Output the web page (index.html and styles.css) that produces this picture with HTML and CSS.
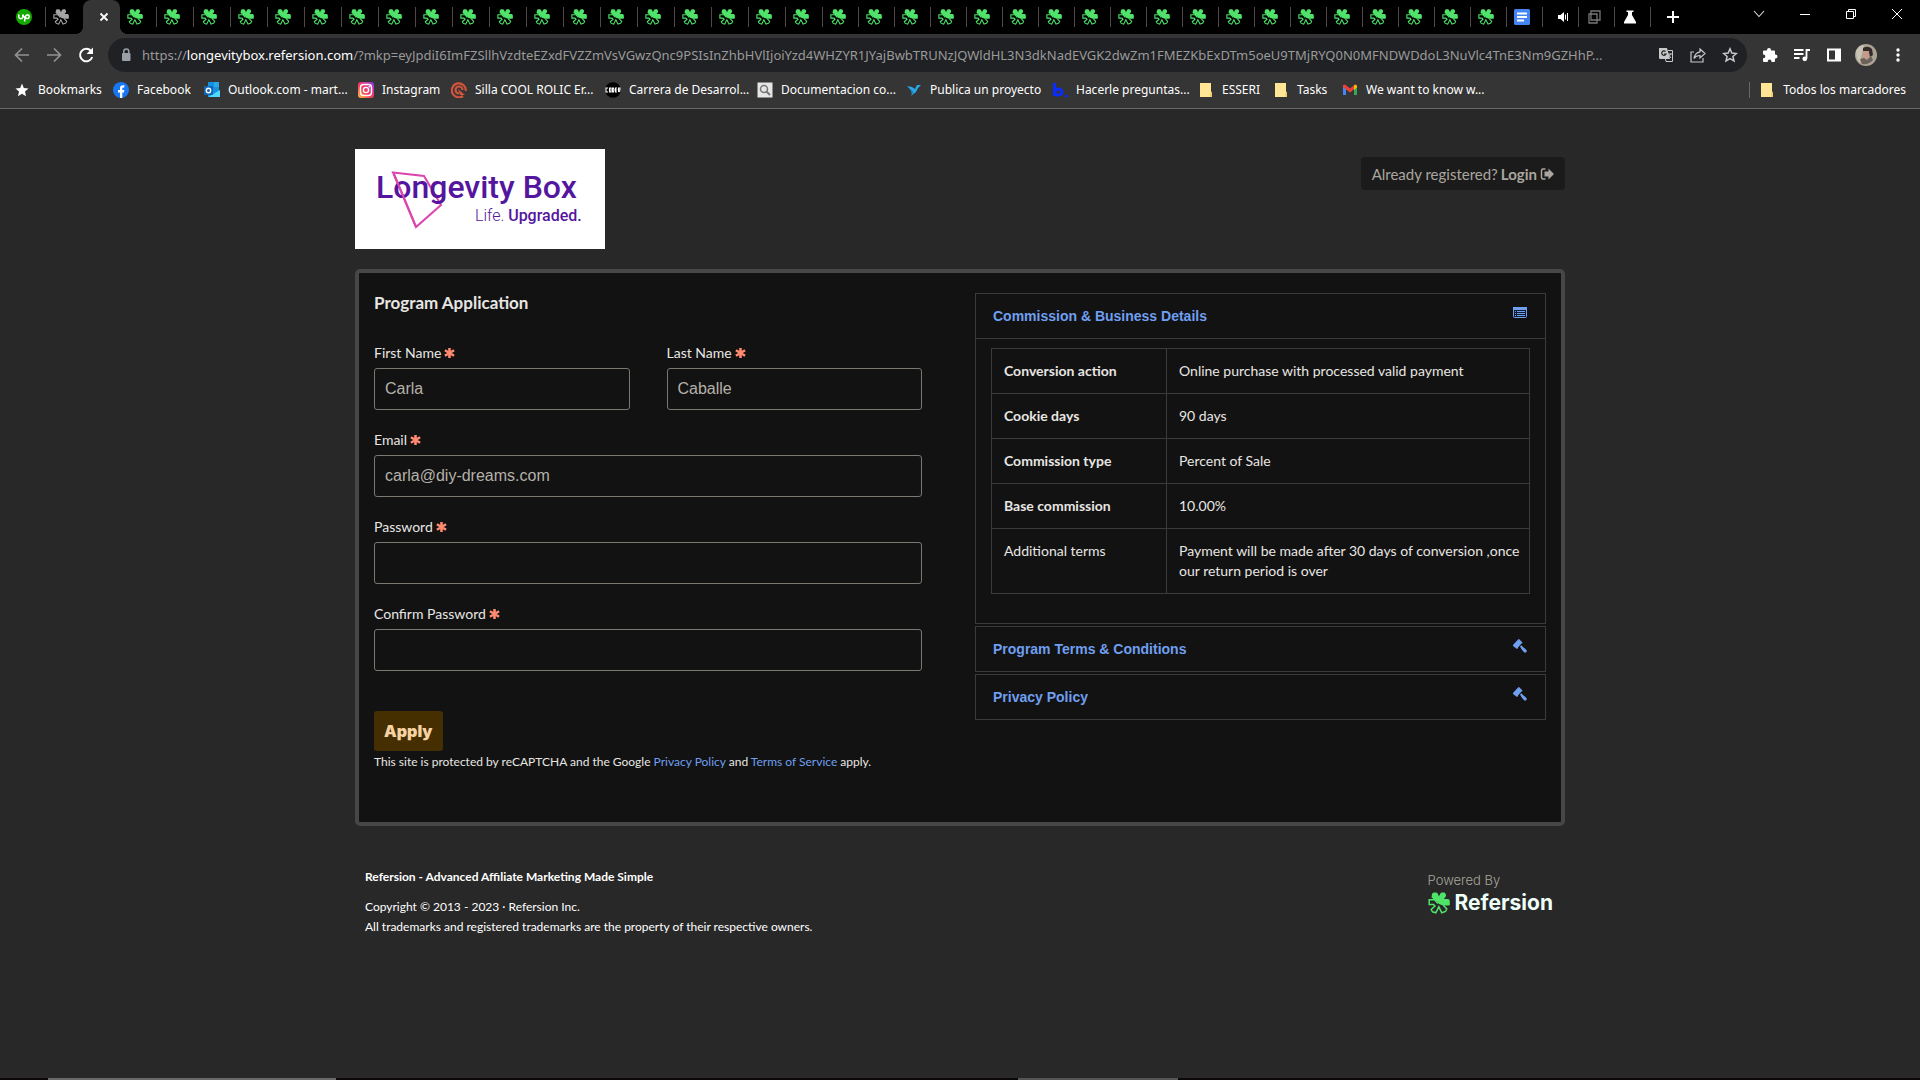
FILE: index.html
```html
<!DOCTYPE html>
<html lang="en">
<head>
<meta charset="utf-8">
<meta name="viewport" content="width=device-width, initial-scale=1">
<title>Longevity Box - Program Application</title>
<link rel="stylesheet" href="styles.css">
</head>
<body>
<svg class="sprite" aria-hidden="true">
  <symbol id="clover" viewBox="0 0 22 22">
    <path fill="currentColor" d="M9 9.500L3.500 5.500L4 2Q4.500 .500 6 .500H8.500Q10 1 11 4.500Q12 1 13.500 .500H16.500Q18.500 2 18 4L16 7H20Q21.800 7.300 21.800 9V13L20.500 13.500H15L11 12Z"/>
    <path fill="none" stroke="currentColor" stroke-width="1.500" d="M10 11.500L6.500 7.800H1.200V12.500H5.500L7 14L3.200 17.500L4.500 19.800L7.800 20.800L10.800 14.800L13.800 20.800L17.500 19.500L18.800 17L15.300 13.300"/>
  </symbol>
  <symbol id="folder" viewBox="0 0 16 16">
    <path fill="#ffe596" d="M2 1H13V9L14 11V15H2Z"/><path fill="#f3cf6b" d="M12 11h2v4h-2z"/>
  </symbol>
  <symbol id="required" viewBox="0 0 12 12">
    <path stroke="#ff8a70" stroke-width="2.800" d="M6 .500V11.500M1 3L11 9M11 3L1 9"/>
  </symbol>
  <symbol id="gavel" viewBox="0 0 14 14">
    <path fill="currentColor" d="M0 6L5 .500L6 0L9.500 3.500L9 4.500L8.500 4.500L5 8.500L5 9L4 10L0 7ZM7 7.500L8.500 6.200L10 8L13.500 11L13.800 12.500L12.500 13.800L11 13.300L8.500 10.200Z"/>
  </symbol>
</svg>

<header class="browser">
  <div class="tabstrip">
    <div class="tabs">
      <span class="tab"><svg viewBox="0 0 16 16"><circle cx="8" cy="8" r="8" fill="#14a800"/><path fill="none" stroke="#fff" stroke-width="1.500" d="M2.800 5.500V8Q3 9.800 4.800 9.800Q6.700 9.700 6.800 8V5.500Q7.800 8.500 9.200 9.300M8.500 12.500L9.300 8Q9.800 5.700 11.500 5.700Q13.300 5.900 13.300 7.700Q13 9.600 11.500 9.600Q10 9.500 8.800 8"/></svg></span>
      <span class="tab muted"><svg><use href="#clover"/></svg></span>
      <span class="tab active"><button class="tab-close" aria-label="Close tab"><svg viewBox="0 0 16 16"><path stroke="#fff" stroke-width="1.800" d="M4.500 4.500L11.500 11.500M11.500 4.500L4.500 11.500"/></svg></button></span>
      <span class="tab"><svg><use href="#clover"/></svg></span>
      <span class="tab"><svg><use href="#clover"/></svg></span>
      <span class="tab"><svg><use href="#clover"/></svg></span>
      <span class="tab"><svg><use href="#clover"/></svg></span>
      <span class="tab"><svg><use href="#clover"/></svg></span>
      <span class="tab"><svg><use href="#clover"/></svg></span>
      <span class="tab"><svg><use href="#clover"/></svg></span>
      <span class="tab"><svg><use href="#clover"/></svg></span>
      <span class="tab"><svg><use href="#clover"/></svg></span>
      <span class="tab"><svg><use href="#clover"/></svg></span>
      <span class="tab"><svg><use href="#clover"/></svg></span>
      <span class="tab"><svg><use href="#clover"/></svg></span>
      <span class="tab"><svg><use href="#clover"/></svg></span>
      <span class="tab"><svg><use href="#clover"/></svg></span>
      <span class="tab"><svg><use href="#clover"/></svg></span>
      <span class="tab"><svg><use href="#clover"/></svg></span>
      <span class="tab"><svg><use href="#clover"/></svg></span>
      <span class="tab"><svg><use href="#clover"/></svg></span>
      <span class="tab"><svg><use href="#clover"/></svg></span>
      <span class="tab narrow"><svg><use href="#clover"/></svg></span>
      <span class="tab narrow"><svg><use href="#clover"/></svg></span>
      <span class="tab narrow"><svg><use href="#clover"/></svg></span>
      <span class="tab narrow"><svg><use href="#clover"/></svg></span>
      <span class="tab narrow"><svg><use href="#clover"/></svg></span>
      <span class="tab narrow"><svg><use href="#clover"/></svg></span>
      <span class="tab narrow"><svg><use href="#clover"/></svg></span>
      <span class="tab narrow"><svg><use href="#clover"/></svg></span>
      <span class="tab narrow"><svg><use href="#clover"/></svg></span>
      <span class="tab narrow"><svg><use href="#clover"/></svg></span>
      <span class="tab narrow"><svg><use href="#clover"/></svg></span>
      <span class="tab narrow"><svg><use href="#clover"/></svg></span>
      <span class="tab narrow"><svg><use href="#clover"/></svg></span>
      <span class="tab narrow"><svg><use href="#clover"/></svg></span>
      <span class="tab narrow"><svg><use href="#clover"/></svg></span>
      <span class="tab narrow"><svg><use href="#clover"/></svg></span>
      <span class="tab narrow"><svg><use href="#clover"/></svg></span>
      <span class="tab narrow"><svg><use href="#clover"/></svg></span>
      <span class="tab narrow"><svg><use href="#clover"/></svg></span>
      <span class="tab narrow"><svg viewBox="0 0 16 16"><rect width="16" height="16" rx="1.500" fill="#4385f5"/><path stroke="#fff" stroke-width="2" d="M3 4.500H13M3 8H13M3 11.500H10"/></svg></span>
      <span class="tab narrow audio"><svg viewBox="0 0 16 16"><path fill="#fff" d="M4 6H6.500L10 3V13L6.500 10H4Z"/><path stroke="#fff" d="M11.500 5.500V10.500M13.500 4V12"/></svg></span>
      <span class="tab narrow"><svg viewBox="0 0 16 16"><path fill="none" stroke="#777" stroke-width="1.300" d="M5 2H14V11H5ZM3 5H11V14H3Z"/></svg></span>
      <span class="tab narrow"><svg viewBox="0 0 16 16"><path fill="#fff" d="M4.500 1.500H11.500V3H10V6L14 13V14.500H2V13L6 6V3H4.500Z"/></svg></span>
      <button class="new-tab" aria-label="New tab"><svg viewBox="0 0 16 16"><path stroke="#fff" stroke-width="2" d="M8 2V14M2 8H14"/></svg></button>
    </div>
    <div class="window-controls">
      <button aria-label="Search tabs"><svg viewBox="0 0 16 16"><path fill="none" stroke="#ddd" stroke-width="1.100" d="M3 5L8 10.500L13 5"/></svg></button>
      <button aria-label="Minimize"><svg viewBox="0 0 16 16"><path stroke="#fff" d="M3 8.500H13"/></svg></button>
      <button aria-label="Restore"><svg viewBox="0 0 16 16"><path fill="none" stroke="#fff" d="M3.500 5.500H10.500V12.500H3.500ZM5.500 5.500V3.500H12.500V10.500H10.500"/></svg></button>
      <button aria-label="Close"><svg viewBox="0 0 16 16"><path stroke="#fff" d="M3 3L13 13M13 3L3 13"/></svg></button>
    </div>
  </div>

  <div class="toolbar">
    <button class="tool dim" aria-label="Back"><svg viewBox="0 0 16 16"><path fill="none" stroke="currentColor" stroke-width="1.700" d="M15 8H2M8 1.500L1.500 8L8 14.500"/></svg></button>
    <button class="tool dim" aria-label="Forward"><svg viewBox="0 0 16 16"><path fill="none" stroke="currentColor" stroke-width="1.700" d="M1 8H14M8 1.500L14.500 8L8 14.500"/></svg></button>
    <button class="tool" aria-label="Reload"><svg viewBox="0 0 16 16"><path fill="none" stroke="currentColor" stroke-width="2" d="M13 4A6.200 6.200 0 1 0 14.200 10"/><path fill="currentColor" d="M15 .500V7H8.500Z"/></svg></button>
    <div class="omnibox">
      <svg class="lock" viewBox="0 0 16 16"><rect x="4" y="6" width="8.500" height="8" rx="1" fill="#9aa0a6"/><path fill="none" stroke="#9aa0a6" stroke-width="1.500" d="M5.800 7V4.500A2.500 2.500 0 0 1 10.800 4.500V7"/></svg>
      <span class="url">https://<b>longevitybox.refersion.com</b>/?mkp=eyJpdiI6ImFZSllhVzdteEZxdFVZZmVsVGwzQnc9PSIsInZhbHVlIjoiYzd4WHZYR1JYajBwbTRUNzJQWldHL3N3dkNadEVGK2dwZm1FMEZKbExDTm5oeU9TMjRYQ0N0MFNDWDdoL3NuVlc4TnE3Nm9GZHhP...</span>
      <button class="tool light" aria-label="Translate"><svg viewBox="0 0 16 16"><path fill="currentColor" d="M1 1H9L12 12H2Q1 12 1 11Z"/><path fill="none" stroke="currentColor" d="M10 3.500H14.500V14.500H8L7.500 12M9.500 7H14M12.500 6.500Q12 9 10 10.500M10.500 8L13 11"/><path fill="none" stroke="#202124" stroke-width="1.200" d="M7.500 4.500A2.200 2.200 0 1 0 8 7H6"/></svg></button>
      <button class="tool light" aria-label="Share"><svg viewBox="0 0 16 16"><path fill="none" stroke="currentColor" stroke-width="1.200" d="M4 5H1V15H13V11M10 2L15 6.500L10 11V8.500Q6 8.500 4 11.500Q5 5.500 10 4.800Z"/></svg></button>
      <button class="tool light" aria-label="Bookmark this page"><svg viewBox="0 0 16 16"><path fill="none" stroke="currentColor" stroke-width="1.500" d="M8 1.800L9.800 6.100L14.400 6.500L10.900 9.500L12 14L8 11.600L4 14L5.100 9.500L1.600 6.500L6.200 6.100Z"/></svg></button>
    </div>
    <button class="tool" aria-label="Extensions"><svg viewBox="0 0 16 16"><path fill="currentColor" d="M1 4.500Q1 3.500 2 3.500H5V3A2 2 0 0 1 9 3V3.500H12Q13 3.500 13 4.500V7.500H13.500A2 2 0 0 1 13.500 11.500H13V14Q13 15 12 15H9.500V14.500A1.800 1.800 0 0 0 5.700 14.500V15H2Q1 15 1 14V11.200H1.500A1.800 1.800 0 0 0 1.500 7.500H1Z"/></svg></button>
    <button class="tool" aria-label="Media controls"><svg viewBox="0 0 16 16"><path fill="none" stroke="currentColor" stroke-width="1.800" d="M0 3H9.500M0 7H9.500M0 11H5.500M12.500 11.500V3H16"/><circle cx="10.800" cy="11.800" r="2.400" fill="currentColor"/></svg></button>
    <button class="tool" aria-label="Side panel"><svg viewBox="0 0 16 16"><path fill="none" stroke="currentColor" stroke-width="2" d="M2 2.500H14V13.500H2Z"/><path fill="currentColor" d="M9 2H15V14H9Z"/></svg></button>
    <button class="tool avatar" aria-label="Profile"><svg viewBox="0 0 22 22"><circle cx="11" cy="11" r="11" fill="#aaa393"/><path fill="#c9c3b5" d="M1 7Q4 1 9 1L5 19Q1 16 1 7Z"/><path fill="#332b29" d="M8 4Q13 1 17 5L18 11L15 13L14 8L8 8Z"/><path fill="#c9998a" d="M8 7L14 7L14 13L10 15L8 12Z"/><path fill="#6d6259" d="M5 15L9 14L12 16L16 12L18 16Q14 21 7 20Z"/></svg></button>
    <button class="tool" aria-label="Menu"><svg viewBox="0 0 16 16"><g fill="currentColor"><circle cx="8" cy="3" r="1.700"/><circle cx="8" cy="8" r="1.700"/><circle cx="8" cy="13" r="1.700"/></g></svg></button>
  </div>

  <nav class="bookmarks" aria-label="Bookmarks">
    <a href="#"><svg viewBox="0 0 16 16"><path fill="#fff" d="M8 1.500L9.800 6L14.500 6.400L11 9.500L12 14.200L8 11.700L4 14.200L5 9.500L1.500 6.400L6.200 6Z"/></svg>Bookmarks</a>
    <a href="#"><svg viewBox="0 0 16 16"><circle cx="8" cy="8" r="8" fill="#1877f2"/><path fill="#fff" d="M7 16V10.500H5V8H7V6Q7 3.300 10 3.300H11.300V5.500H10.200Q9.300 5.500 9.300 6.500V8H11.300L11 10.500H9.300V16Z"/></svg>Facebook</a>
    <a href="#"><svg viewBox="0 0 16 16"><path fill="#1490df" d="M4 0H15V9L16 9V15H4Z"/><path fill="#28a8ea" d="M10 0H15V5H10Z"/><path fill="#50d9ff" d="M4 15L16 8V15Z"/><rect y="4" width="9" height="9" fill="#0f64b5"/><circle cx="4.500" cy="8.500" r="2.200" fill="none" stroke="#fff" stroke-width="1.400"/></svg>Outlook.com - mart...</a>
    <a href="#"><svg viewBox="0 0 16 16"><defs><linearGradient id="ig" x1="0" y1="1" x2="1" y2="0"><stop offset="0" stop-color="#ffc63d"/><stop offset=".4" stop-color="#fb3e52"/><stop offset=".75" stop-color="#c837ab"/><stop offset="1" stop-color="#7a3ef0"/></linearGradient></defs><rect width="16" height="16" rx="3" fill="url(#ig)"/><g fill="none" stroke="#fff" stroke-width="1.400"><rect x="2.500" y="2.500" width="11" height="11" rx="3"/><circle cx="8" cy="8" r="2.600"/></g><circle cx="11.300" cy="4.700" r=".8" fill="#fff"/></svg>Instagram</a>
    <a href="#"><svg viewBox="0 0 16 16"><g fill="none" stroke="#d2543a" stroke-width="2.200"><path d="M12 14A7 7 0 1 1 14.800 9"/><path d="M8 11.500A3.500 3.500 0 1 1 11.500 8"/></g><path fill="#d2543a" d="M7 7L14 13L9 13Z"/></svg>Silla COOL ROLIC Er...</a>
    <a href="#"><svg viewBox="0 0 16 16"><circle cx="8" cy="8" r="7.800" fill="#000"/><path fill="none" stroke="#fff" stroke-width="1.100" d="M3 6H1V10H3M4.500 6H6V10H4.500ZM7.500 6H8.500L9 8L8.500 10H7.500ZM12 6H10.500V10H12M10.500 8H12M13.500 10V6H15V8H13.500L15 10"/></svg>Carrera de Desarrol...</a>
    <a href="#"><svg viewBox="0 0 16 16"><rect x=".5" y=".5" width="15" height="15" fill="#e6e6e6"/><circle cx="7" cy="7" r="3.500" fill="none" stroke="#777" stroke-width="1.500"/><path stroke="#777" stroke-width="2" d="M9.500 9.500L13 13"/></svg>Documentacion co...</a>
    <a href="#"><svg viewBox="0 0 16 16"><path fill="#29a8e8" d="M1 4L6 5L9 7L11 3L15 3L12 6L10 10L5 14L7 10Z"/><path fill="#168bd0" d="M2 5L8 11L6 13L5 9Z"/></svg>Publica un proyecto</a>
    <a href="#"><svg viewBox="0 0 16 16"><path fill="none" stroke="#0a2cff" stroke-width="3" d="M2.500 1V14M3 10.500A3.500 3 0 1 1 6.500 13Q3 13.500 3 10.500"/><circle cx="14.500" cy="14" r="1.500" fill="#0a2cff"/></svg>Hacerle preguntas...</a>
    <a href="#"><svg><use href="#folder"/></svg>ESSERI</a>
    <a href="#"><svg><use href="#folder"/></svg>Tasks</a>
    <a href="#"><svg viewBox="0 0 16 16"><path fill="#4285f4" d="M1 4L4 6V13H1Z"/><path fill="#34a853" d="M12 6L15 4V13H12Z"/><path fill="#ea4335" d="M1 3L3 2.500L8 6.500L13 2.500V6.500L8 10.500L1 5Z"/><path fill="#fbbc04" d="M12 3.200L14 2.500L15 4V5.500L12 8Z"/></svg>We want to know w...</a>
    <a href="#" class="all-bookmarks"><svg><use href="#folder"/></svg>Todos los marcadores</a>
  </nav>
</header>

<div class="container">
  <div class="masthead">
    <svg class="brand" viewBox="0 0 250 100" role="img" aria-label="Longevity Box">
      <rect width="250" height="100" fill="#fff"/>
      <path fill="none" stroke="#dc45ae" stroke-width="2" d="M38 23.500L69 27L86 56L61 78Z"/>
      <text class="brand-name" x="21" y="49">Longevity Box</text>
      <path fill="none" stroke="#dc45ae" stroke-width="2" d="M39 25L61 78"/>
      <text class="brand-tag" x="120" y="72">Life. <tspan class="brand-strong">Upgraded.</tspan></text>
    </svg>
    <a class="login" href="#"><span>Already registered?</span> <strong>Login</strong><svg viewBox="0 0 14 14"><path fill="none" stroke="currentColor" stroke-width="1.500" d="M5.500 2H3Q1.500 2 1.500 3.500V10.500Q1.500 12 3 12H5.500"/><path fill="currentColor" d="M4.500 4.500H8.500V1.500L14 7L8.500 12.500V9.500H4.500Z"/></svg></a>
  </div>

  <main class="card">
    <form class="application">
      <h1>Program Application</h1>
      <div class="name-row">
        <div class="field"><label for="first">First Name <svg><use href="#required"/></svg></label><input id="first" type="text" value="Carla"></div>
        <div class="field"><label for="last">Last Name <svg><use href="#required"/></svg></label><input id="last" type="text" value="Caballe"></div>
      </div>
      <div class="field"><label for="email">Email <svg><use href="#required"/></svg></label><input id="email" type="email" value="carla@diy-dreams.com"></div>
      <div class="field"><label for="password">Password <svg><use href="#required"/></svg></label><input id="password" type="password"></div>
      <div class="field"><label for="confirm">Confirm Password <svg><use href="#required"/></svg></label><input id="confirm" type="password"></div>
      <button class="apply" type="button">Apply</button>
      <p class="captcha">This site is protected by reCAPTCHA and the Google <a href="#">Privacy Policy</a> and <a href="#">Terms of Service</a> apply.</p>
    </form>

    <div class="accordion">
      <section class="panel">
        <h2><a href="#">Commission &amp; Business Details</a><svg viewBox="0 0 14 14"><rect x=".500" y="1.500" width="13" height="10" rx="1" fill="#101a30" stroke="currentColor"/><path fill="currentColor" d="M0 1H14V4H0Z"/><path stroke="currentColor" d="M2 5.500H3M4 5.500H12M2 7.500H3M4 7.500H12M2 9.500H3M4 9.500H12"/></svg></h2>
        <div class="panel-body">
          <table>
            <tr><th scope="row">Conversion action</th><td>Online purchase with processed valid payment</td></tr>
            <tr><th scope="row">Cookie days</th><td>90 days</td></tr>
            <tr><th scope="row">Commission type</th><td>Percent of Sale</td></tr>
            <tr><th scope="row">Base commission</th><td>10.00%</td></tr>
            <tr><th scope="row" class="plain">Additional terms</th><td>Payment will be made after 30 days of conversion ,once our return period is over</td></tr>
          </table>
        </div>
      </section>
      <section class="panel"><h2><a href="#">Program Terms &amp; Conditions</a><svg><use href="#gavel"/></svg></h2></section>
      <section class="panel"><h2><a href="#">Privacy Policy</a><svg><use href="#gavel"/></svg></h2></section>
    </div>
  </main>

  <footer class="footer">
    <div class="legal">
      <strong>Refersion - Advanced Affiliate Marketing Made Simple</strong>
      <p>Copyright © 2013 - 2023 · Refersion Inc.<br>All trademarks and registered trademarks are the property of their respective owners.</p>
    </div>
    <div class="powered">
      <span>Powered By</span>
      <a href="#"><svg><use href="#clover"/></svg>Refersion</a>
    </div>
  </footer>
</div>
<div class="taskbar-edge"><i></i><i></i></div>
</body>
</html>
```
FILE: styles.css
```css
* { box-sizing: border-box; }

body {
  margin: 0;
  min-height: 100vh;
  display: flex;
  flex-direction: column;
  background: #282828;
  color: #e8e6e3;
  font: 14px/20px Lato, "Liberation Sans", sans-serif;
}

a { color: #6f9ff0; text-decoration: none; }
button { padding: 0; border: 0; background: none; color: inherit; }
svg { display: block; flex: none; }
.sprite { position: absolute; width: 0; height: 0; }

/* Browser chrome */
.browser {
  background: #353535;
  border-bottom: 1px solid #66676a;
  font-family: "Noto Sans", "Open Sans", sans-serif;
  color: #fff;
}
.tabstrip { display: flex; justify-content: space-between; height: 34px; background: #000; }
.tabs { display: flex; padding-left: 9px; color: #4fe36a; }
.tab {
  display: flex;
  align-items: center;
  width: 37px;
  padding-left: 7px;
  background: linear-gradient(#504848, #504848) right center / 1px 20px no-repeat;
}
.tab svg { width: 16px; height: 16px; }
.tab.narrow { width: 36px; }
.tab.muted { color: #a5a5a5; background: none; }
.tab.audio { padding-left: 11px; }
.tab.active { position: relative; padding-left: 13px; background: #353535; border-radius: 8px 8px 0 0; }
.tab.active::before,
.tab.active::after {
  content: "";
  position: absolute;
  bottom: 0;
  width: 8px;
  height: 8px;
}
.tab.active::before { right: 100%; background: radial-gradient(circle at 0 0, transparent 8px, #353535 8px); }
.tab.active::after { left: 100%; background: radial-gradient(circle at 100% 0, transparent 8px, #353535 8px); }
.new-tab { width: 44px; display: grid; place-items: center; }
.new-tab svg { width: 16px; height: 16px; }
.window-controls { display: flex; }
.window-controls button { width: 46px; height: 28px; display: grid; place-items: center; }
.window-controls svg { width: 16px; height: 16px; }

.toolbar { display: flex; align-items: center; height: 42px; padding: 0 6px; }
.tool { width: 32px; height: 32px; display: grid; place-items: center; flex: none; }
.tool svg { width: 16px; height: 16px; }
.tool.dim { color: #929292; }
.tool.light { color: #c8c8c8; }
.tool.avatar svg { width: 22px; height: 22px; }
.omnibox {
  display: flex;
  align-items: center;
  flex: 1;
  min-width: 0;
  height: 34px;
  margin: 0 7px 0 6px;
  padding: 0 1px 0 10px;
  border-radius: 17px;
  background: #202124;
}
.lock { width: 16px; height: 16px; margin-right: 8px; }
.url { flex: 1; min-width: 0; overflow: hidden; white-space: nowrap; font-size: 13px; color: #9a9a9a; }
.url b { font-weight: 400; color: #fff; }

.bookmarks {
  display: grid;
  grid-template-columns: 99px 91px 154px 93px 154px 152px 149px 146px 146px 75px 69px 1fr auto;
  align-items: center;
  height: 32px;
  padding: 0 14px 4px;
  font-size: 12px;
}
.bookmarks a { display: flex; align-items: center; gap: 8px; color: #fff; white-space: nowrap; }
.bookmarks svg { width: 16px; height: 16px; }
.bookmarks .all-bookmarks { padding-left: 9px; border-left: 1px solid #66676a; height: 16px; }

/* Page */
.container { width: 100%; max-width: 1210px; margin: 0 auto; padding: 40px 0; }
.masthead { display: flex; justify-content: space-between; align-items: flex-start; margin-bottom: 20px; }
.brand { width: 250px; height: 100px; }
.brand-name { font: 500 32px Roboto, sans-serif; fill: #54169e; }
.brand-tag { font: 300 16px Roboto, sans-serif; fill: #54169e; }
.brand-strong { font-weight: 500; }
.login {
  display: flex;
  align-items: center;
  gap: 3px;
  margin-top: 8px;
  padding: 7px 11px 6px;
  border-radius: 4px;
  background: #1b1b1b;
  color: #aaa69f;
  font-size: 15px;
}
.login svg { width: 14px; height: 14px; }

.card {
  display: grid;
  grid-template-columns: 548fr 571fr;
  gap: 53px;
  align-items: start;
  padding: 20px 15px 50px;
  border: 4px solid #474747;
  border-radius: 5px;
  background: #121212;
}
h1 { margin: 0 0 30px; font-size: 17px; line-height: 20px; }
.name-row { display: grid; grid-template-columns: 1fr 1fr; gap: 37px; }
.field { margin-bottom: 20px; }
.field label { display: flex; align-items: center; gap: 3px; margin-bottom: 5px; }
.field label svg { width: 11px; height: 12px; }
.field input {
  display: block;
  width: 100%;
  height: 42px;
  padding: 0 10px;
  border: 1px solid #7c776f;
  border-radius: 3px;
  background: transparent;
  color: #b5b1aa;
  font: 16px "Liberation Sans", Arial, sans-serif;
}
.apply {
  display: block;
  height: 40px;
  margin-top: 40px;
  padding: 0 10px;
  border-radius: 3px;
  background: #452f00;
  color: #f7d3a4;
  font: 900 16px Inter, sans-serif;
}
.captcha { margin: 1px 0 0; font-size: 12px; }

.accordion { display: grid; gap: 2px; }
.panel { border: 1px solid #3b3b3b; }
.panel h2 {
  display: flex;
  justify-content: space-between;
  margin: 0;
  padding: 12px 18px 12px 17px;
  font: bold 14px/20px "Liberation Sans", Arial, sans-serif;
}
.panel h2 svg { width: 14px; height: 14px; color: #6f9ff0; }
.panel-body { padding: 9px 15px 29px; border-top: 1px solid #3b3b3b; }
table { width: 100%; border-collapse: collapse; }
th, td { padding: 12px 6px 12px 12px; border: 1px solid #3b3b3b; text-align: left; vertical-align: top; }
th { width: 175px; }
th.plain { font-weight: 400; }

.footer { display: flex; justify-content: space-between; padding: 41px 12px 0 10px; font-size: 12px; color: #fff; }
.legal p { margin: 10px 0 0; }
.powered { padding-top: 3px; font-family: Inter, sans-serif; }
.powered span { display: block; color: #a9a59e; font-size: 13px; font-weight: 300; }
.powered a { display: flex; align-items: center; gap: 5px; margin-top: 2px; color: #eefffa; font-size: 21px; font-weight: 700; }
.powered svg { width: 22px; height: 22px; color: #4fe36a; }

.taskbar-edge { display: flex; height: 2px; margin-top: auto; padding-left: 48px; background: #0c0808; }
.taskbar-edge i { width: 288px; background: #6a6a6a; }
.taskbar-edge i + i { width: 160px; margin-left: 682px; background: #555; }
```
